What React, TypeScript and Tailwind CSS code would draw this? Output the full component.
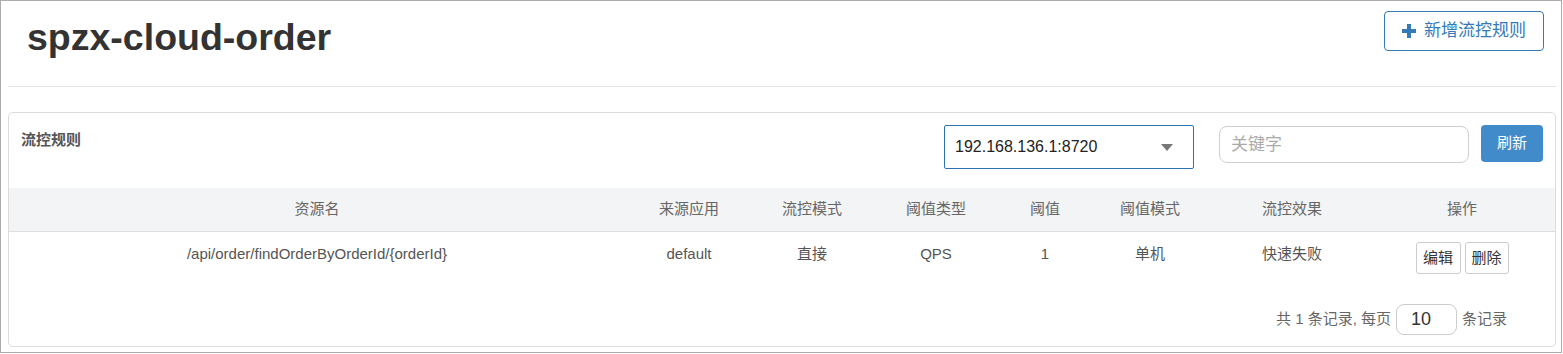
import React from "react";

const cols = [
  { w: "w-[616px]", label: "资源名" },
  { w: "w-[128px]", label: "来源应用" },
  { w: "w-[118px]", label: "流控模式" },
  { w: "w-[130px]", label: "阈值类型" },
  { w: "w-[88px]", label: "阈值" },
  { w: "w-[122px]", label: "阈值模式" },
  { w: "w-[162px]", label: "流控效果" },
  { w: "w-[178px]", label: "操作" },
];

const row = ["/api/order/findOrderByOrderId/{orderId}", "default", "直接", "QPS", "1", "单机", "快速失败"];

const font = "font-['Liberation_Sans','Noto_Sans_CJK_SC',sans-serif]";

export default function App() {
  return (
    <div className={`w-[1562px] h-[353px] border border-[#ababab] bg-white ${font} text-[#333] overflow-hidden`}>
      <div className="pl-[7px] pr-[5px]">
        {/* header */}
        <div className="flex items-start justify-between h-[86px] border-b border-[#e5e5e5]">
          <h1 className="pl-[19px] pt-[14px] text-[37.5px] leading-[44px] font-bold text-[#333]">spzx-cloud-order</h1>
          <button className="mt-[10px] mr-[12px] h-[40px] w-[160px] flex items-center justify-center gap-[8px] border border-[#337ab7] rounded-[4px] text-[#337ab7] text-[17px]">
            <svg width="14" height="14" viewBox="0 0 14 14">
              <rect x="5" y="0" width="4" height="14" fill="#337ab7" />
              <rect x="0" y="5" width="14" height="4" fill="#337ab7" />
            </svg>
            <span>新增流控规则</span>
          </button>
        </div>
        {/* panel */}
        <div className="mt-[25px] h-[235px] border border-[#dcdcdc] rounded-[5px] flex flex-col">
          <div className="flex items-start h-[75px]">
            <div className="pl-[12px] pt-[16px] text-[15px] font-bold text-[#555]">流控规则</div>
            <div className="flex-1" />
            <div className="mt-[12px] w-[250px] h-[44px] border border-[#2f72b4] rounded-[2px] flex items-center justify-between pl-[10px] pr-[20px] text-[16px] text-[#222]">
              <span>192.168.136.1:8720</span>
              <svg width="12" height="7" viewBox="0 0 12 7">
                <path d="M0 0 L12 0 L6 7 Z" fill="#777" />
              </svg>
            </div>
            <div className="ml-[25px] mt-[13px] w-[250px] h-[37px] border border-[#cfcfcf] rounded-[8px] flex items-center pl-[11px] text-[17px] text-[#aaa]">
              关键字
            </div>
            <button className="ml-[12px] mt-[12px] mr-[12px] w-[62px] h-[37px] rounded-[4px] bg-[#428bca] text-white text-[15px]">
              刷新
            </button>
          </div>
          {/* table header */}
          <div className="flex h-[44px] bg-[#f3f4f5] border-b border-[#dedede] text-[15px] text-[#666]">
            {cols.map((c) => (
              <div key={c.label} className={`${c.w} flex items-center justify-center`}>{c.label}</div>
            ))}
          </div>
          {/* row */}
          <div className="flex h-[50px] text-[15px] text-[#555]">
            {row.map((v, i) => (
              <div key={i} className={`${cols[i].w} flex justify-center pt-[11px]`}>{v}</div>
            ))}
            <div className="w-[178px] flex justify-center gap-[4px] pt-[10px]">
              <button className="w-[45px] h-[32px] border border-[#ccc] rounded-[3px] text-[15px] text-[#333]">编辑</button>
              <button className="w-[44px] h-[32px] border border-[#ccc] rounded-[3px] text-[15px] text-[#333]">删除</button>
            </div>
          </div>
          {/* pagination */}
          <div className="flex items-center justify-end pr-[48px] pt-[22px] text-[15px] text-[#666]">
            <span>共 1 条记录, 每页</span>
            <div className="ml-[5px] w-[61px] h-[31px] border border-[#ccc] rounded-[8px] flex items-center pl-[14px] text-[18px] text-[#333]">10</div>
            <span className="ml-[5px]">条记录</span>
          </div>
        </div>
      </div>
    </div>
  );
}
